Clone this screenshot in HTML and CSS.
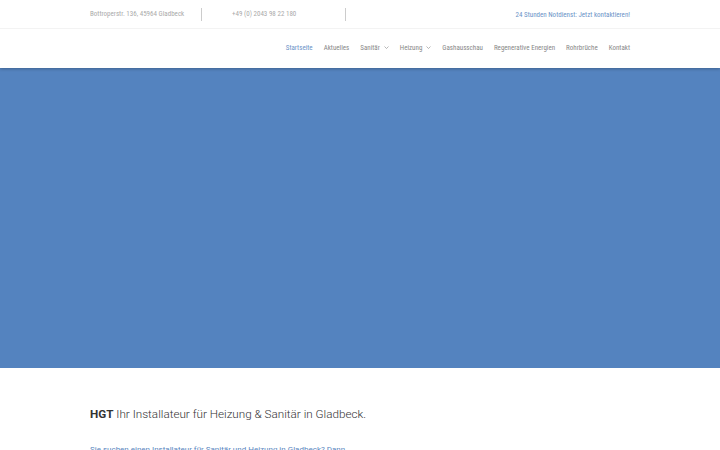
FILE: index.html
```html
<!DOCTYPE html>
<html lang="de">
<head>
    <meta charset="UTF-8">
    <meta name="viewport" content="width=device-width, initial-scale=1.0">
    <title>HGT Gladbeck</title>
    <link rel="stylesheet" href="styles.css">
</head>
<body>
    <header class="site-header">
        <div class="top-bar">
            <div class="container top-inner">
                <div class="top-info">
                    <span class="top-item">Bottroperstr. 136, 45964 Gladbeck</span>
                    <span class="top-item">+49 (0) 2043 98 22 180</span>
                </div>
                <a class="top-cta" href="#">24 Stunden Notdienst: Jetzt kontaktieren!</a>
            </div>
        </div>
        <nav class="main-nav">
            <div class="container nav-inner">
                <a class="nav-link active" href="#">Startseite</a>
                <a class="nav-link" href="#">Aktuelles</a>
                <a class="nav-link" href="#">Sanitär <svg viewBox="0 0 10 6" class="caret"><path d="M1 1l4 4 4-4" /></svg></a>
                <a class="nav-link" href="#">Heizung <svg viewBox="0 0 10 6" class="caret"><path d="M1 1l4 4 4-4" /></svg></a>
                <a class="nav-link" href="#">Gashausschau</a>
                <a class="nav-link" href="#">Regenerative Energien</a>
                <a class="nav-link" href="#">Rohrbrüche</a>
                <a class="nav-link" href="#">Kontakt</a>
            </div>
        </nav>
    </header>

    <section class="hero"></section>

    <main class="content container">
        <h1 class="intro"><strong>HGT</strong> Ihr Installateur für Heizung &amp; Sanitär in Gladbeck.</h1>
        <p class="lead"><a href="#">Sie suchen einen Installateur für Sanitär und Heizung in Gladbeck? Dann<br>sind Sie bei uns genau richtig.</a></p>
    </main>
</body>
</html>
```

FILE: styles.css
```css
body {
    margin: 0;
    padding: 0;
    font-family: Roboto, "Liberation Sans", sans-serif;
    background-color: #fff;
    color: #666;
}

a {
    text-decoration: none;
}

.container {
    width: 540px;
    margin: 0 auto;
}

.site-header {
    position: relative;
    z-index: 2;
    background-color: #fff;
    box-shadow: 0 1px 3px rgba(0, 0, 0, 0.25);
    font-family: "Roboto Condensed", Roboto, sans-serif;
}

.top-bar {
    height: 28px;
    border-bottom: 1px solid #f3f3f3;
}

.top-inner {
    display: flex;
    align-items: center;
    justify-content: space-between;
    height: 100%;
    padding-top: 1px;
    box-sizing: border-box;
}

.top-info {
    display: flex;
    align-items: center;
}

.top-item {
    box-sizing: border-box;
    width: 112px;
    font-size: 7px;
    color: #aaa;
    border-right: 1px solid #ccc;
    line-height: 13px;
}

.top-item + .top-item {
    margin-left: 30px;
    width: 114px;
}

.top-cta {
    font-size: 7px;
    color: #6b93c7;
}

.main-nav {
    height: 39px;
}

.nav-inner {
    display: flex;
    align-items: center;
    justify-content: flex-end;
    height: 100%;
    gap: 11px;
    padding-bottom: 2px;
    box-sizing: border-box;
}

.nav-link {
    font-size: 7px;
    color: #888;
    display: flex;
    align-items: center;
}

.nav-link.active {
    color: #6b93c7;
}

.caret {
    width: 5px;
    height: 3px;
    margin-left: 4px;
    fill: none;
    stroke: #888;
    stroke-width: 1.2;
}

.hero {
    height: 300px;
    background-color: #5483bf;
}

.content {
    padding-top: 39px;
}

.intro {
    margin: 0;
    font-size: 11.7px;
    font-weight: 300;
    color: #333;
}

.intro strong {
    font-weight: 700;
}

.lead {
    margin: 24px 0 0;
    font-size: 8px;
}

.lead a {
    color: #5a86c0;
}
```
